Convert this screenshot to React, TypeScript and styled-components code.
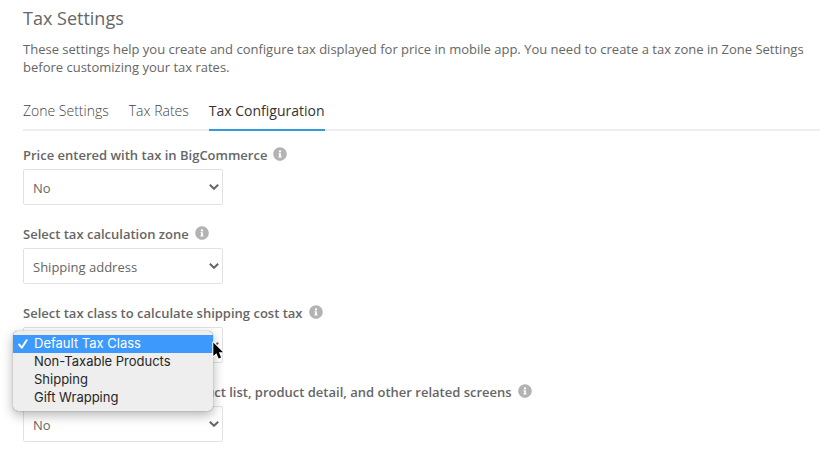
import React, { useState } from "react";
import styled, { createGlobalStyle } from "styled-components";
import { FaInfoCircle } from "react-icons/fa";

const GlobalStyle = createGlobalStyle`
  *, *::before, *::after { box-sizing: border-box; }
  body {
    margin: 0;
    background: #fff;
    color: #666;
    font-family: "Open Sans", "Noto Sans", sans-serif;
    font-size: 13px;
    line-height: 18px;
  }
`;

const Page = styled.main`
  padding: 6px 0 7px 23px;
`;

const Title = styled.h1`
  margin: 0 0 9px;
  font-size: 18px;
  line-height: 25px;
  font-weight: 400;
`;

const Intro = styled.p`
  margin: 0;
`;

const Tabs = styled.nav`
  display: flex;
  gap: 20px;
  margin-top: 25px;
  border-bottom: 2px solid #eee;
`;

const Tab = styled.a<{ $active?: boolean }>`
  margin-bottom: -2px;
  padding-bottom: 8px;
  border-bottom: 2px solid ${(p) => (p.$active ? "#3498db" : "transparent")};
  color: ${(p) => (p.$active ? "#333" : "#444")};
  font-size: 14px;
  line-height: 20px;
  font-weight: ${(p) => (p.$active ? 400 : 300)};
  text-decoration: none;
  white-space: nowrap;
`;

const Form = styled.form`
  display: grid;
  gap: 20px;
  margin-top: 15px;
`;

const Field = styled.div`
  position: relative;
`;

const LabelRow = styled.div`
  display: flex;
  align-items: center;
  gap: 6px;
  height: 18px;
  margin-bottom: 5px;
`;

const Label = styled.label`
  font-weight: 600;
  white-space: nowrap;
`;

const InfoButton = styled.button`
  display: flex;
  padding: 0 0 2px;
  border: 0;
  background: none;
  color: #b3b3b3;
  font-size: 14px;
`;

const SelectBox = styled.div`
  display: grid;
  width: 200px;
`;

const Select = styled.select`
  grid-area: 1 / 1;
  appearance: none;
  width: 100%;
  height: 36px;
  padding: 2px 24px 0 9px;
  border: 1px solid #e2e2e2;
  border-radius: 2px;
  background: #fff;
  color: #666;
  font-family: inherit;
  font-size: 13px;
`;

const Chevron = styled.svg`
  grid-area: 1 / 1;
  place-self: center end;
  width: 10px;
  height: 6px;
  margin-right: 4px;
  pointer-events: none;
  z-index: 1;
`;

const Menu = styled.ul`
  position: absolute;
  z-index: 2;
  top: 27px;
  left: -10px;
  width: 200px;
  margin: 0;
  padding: 4px 0;
  border-radius: 5px;
  background: #eee;
  box-shadow: 0 0 1px rgba(0, 0, 0, 0.6), 0 4px 12px rgba(0, 0, 0, 0.3);
  color: #262626;
  font-family: Inter, "Liberation Sans", sans-serif;
  list-style: none;
`;

const Option = styled.li<{ $active: boolean }>`
  display: grid;
  grid-template-columns: 10px 1fr;
  align-items: center;
  gap: 6px;
  height: 18px;
  padding-left: 5px;
  background: ${(p) => (p.$active ? "#3d99fc" : "transparent")};
  color: ${(p) => (p.$active ? "#fff" : "inherit")};
`;

const OptionText = styled.span`
  grid-column: 2;
  line-height: 16px;
  padding-bottom: 2px;
`;

const Check = styled.svg`
  width: 10px;
  height: 10px;
`;

const Pointer = styled.svg`
  position: absolute;
  z-index: 3;
  top: 37px;
  left: 189px;
  width: 13px;
  height: 20px;
  pointer-events: none;
`;

const tabs = ["Zone Settings", "Tax Rates", "Tax Configuration"];

const taxClasses = ["Default Tax Class", "Non-Taxable Products", "Shipping", "Gift Wrapping"];

const fields = [
  { id: "price-entered", label: "Price entered with tax in BigCommerce", options: ["No", "Yes"] },
  { id: "tax-zone", label: "Select tax calculation zone", options: ["Shipping address", "Billing address"] },
  { id: "shipping-class", label: "Select tax class to calculate shipping cost tax", options: taxClasses, open: true },
  {
    id: "display-price",
    label: "Display price with tax in product list, product detail, and other related screens",
    options: ["No", "Yes"],
  },
];

function OpenMenu({ options, value, onPick }: { options: string[]; value: string; onPick: (v: string) => void }) {
  return (
    <>
      <Menu role="listbox" aria-label="Tax class">
        {options.map((o) => (
          <Option key={o} role="option" aria-selected={o === value} $active={o === value} onClick={() => onPick(o)}>
            {o === value && (
              <Check viewBox="0 0 10 10" fill="none" stroke="#fff" strokeWidth="2" strokeLinecap="round" strokeLinejoin="round">
                <path d="M1.2 5.6 3.8 8.7 8.6 1.2" />
              </Check>
            )}
            <OptionText>{o}</OptionText>
          </Option>
        ))}
      </Menu>
      <Pointer viewBox="0 0 13 20">
        <path
          d="M1.3 1.5v13.6l3.1-2.9 2.2 5.3 2.5-1.1-2.2-5.1h4.2z"
          fill="#000"
          stroke="#fff"
          strokeWidth="2"
          strokeLinejoin="round"
          paintOrder="stroke"
        />
      </Pointer>
    </>
  );
}

function SelectField({ id, label, options, open }: { id: string; label: string; options: string[]; open?: boolean }) {
  const [value, setValue] = useState(options[0]);
  return (
    <Field>
      <LabelRow>
        <Label htmlFor={id}>{label}</Label>
        <InfoButton type="button" aria-label={`About: ${label}`}>
          <FaInfoCircle />
        </InfoButton>
      </LabelRow>
      <SelectBox>
        <Select id={id} value={value} onChange={(e) => setValue(e.target.value)}>
          {options.map((o) => (
            <option key={o}>{o}</option>
          ))}
        </Select>
        <Chevron viewBox="0 0 10 6" fill="none" stroke="#666" strokeWidth="2">
          <path d="M0.8 0.8 5 4.8 9.2 0.8" />
        </Chevron>
      </SelectBox>
      {open && <OpenMenu options={options} value={value} onPick={setValue} />}
    </Field>
  );
}

export default function App() {
  return (
    <>
      <GlobalStyle />
      <Page>
        <Title>Tax Settings</Title>
        <Intro>
          These settings help you create and configure tax displayed for price in mobile app. You need to create a tax
          zone in Zone Settings before customizing your tax rates.
        </Intro>
        <Tabs>
          {tabs.map((t) => (
            <Tab key={t} href="#" $active={t === "Tax Configuration"}>
              {t}
            </Tab>
          ))}
        </Tabs>
        <Form>
          {fields.map((f) => (
            <SelectField key={f.id} {...f} />
          ))}
        </Form>
      </Page>
    </>
  );
}
